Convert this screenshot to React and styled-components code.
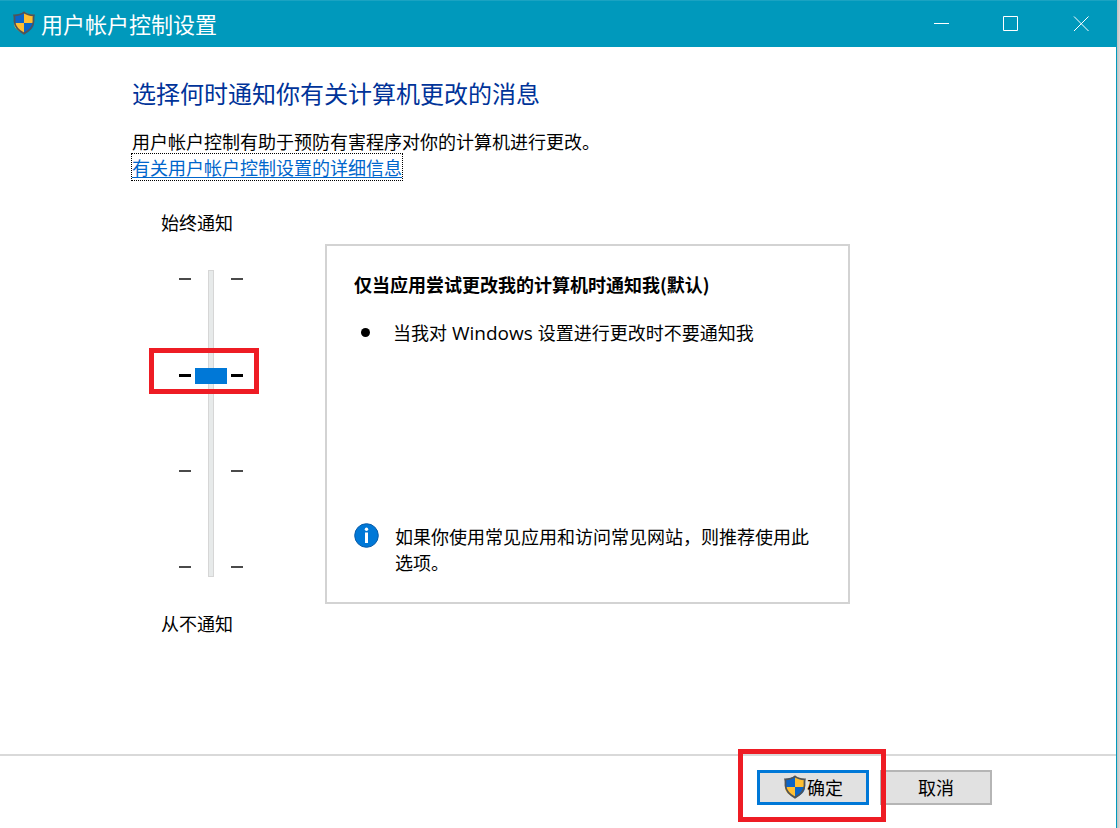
import React, { useState } from 'react'
import styled, { createGlobalStyle } from 'styled-components'

const colors = {
  accent: '#0099bc',
  blue: '#0078d7',
  heading: '#003399',
  link: '#0066cc',
  mark: '#ee1c24',
  line: '#d3d3d3'
}

const GlobalStyle = createGlobalStyle`
  * {
    box-sizing: border-box;
  }

  body {
    margin: 0;
    color: #000;
    font-family: "Noto Sans CJK SC", sans-serif;
    font-size: 18px;
    line-height: 26px;
  }

  h1, h2, p, ul {
    margin: 0;
    padding: 0;
    font-weight: 400;
  }
`

const Desktop = styled.div`
  min-height: 100vh;
  display: flex;
  padding-right: 3px;
  background: linear-gradient(to left, #d8d8d8, #c0c0c0 3px);
`

const Window = styled.div`
  flex: 1;
  display: flex;
  flex-direction: column;
  background: #fff;
  border-right: 1px solid ${colors.accent};
`

const TitleBar = styled.header`
  display: flex;
  align-items: center;
  height: 47px;
  padding-left: 12px;
  color: #fff;
  background: ${colors.accent};
  border-top: 1px solid #1aa3c2;

  > svg {
    margin-bottom: 2px;
  }
`

const WindowTitle = styled.h1`
  flex: 1;
  margin-left: 5px;
  padding-bottom: 3px;
  font-size: 22px;
  line-height: 32px;
`

const CaptionButton = styled.button`
  display: grid;
  place-items: center;
  width: 70px;
  height: 46px;
  padding: 0;
  color: inherit;
  background: none;
  border: 0;
`

const Content = styled.main`
  flex: 1;
  width: 100%;
  max-width: 850px;
  padding: 30px 0 40px 132px;
`

const Heading = styled.h2`
  margin-bottom: 19px;
  color: ${colors.heading};
  font-size: 24px;
  line-height: 32px;
`

const DetailLink = styled.a`
  display: inline-block;
  color: ${colors.link};
  outline: 1px dotted #000;
  text-underline-offset: 2px;
`

const Settings = styled.div`
  display: flex;
  align-items: flex-start;
  margin-top: 29px;
`

const Levels = styled.div`
  display: flex;
  flex-direction: column;
  width: 193px;
  padding-left: 29px;
`

const SliderBox = styled.div`
  position: relative;
  display: grid;
  grid-template-columns: 12px 32px 12px;
  column-gap: 4px;
  align-items: center;
  width: 64px;
  height: 307px;
  margin: 35px 0 33px 18px;
`

const Ticks = styled.div`
  display: flex;
  flex-direction: column;
  justify-content: space-between;
  height: 292px;
`

const Tick = styled.span`
  height: 4px;
  border: solid ${props => (props.$active ? '#000' : '#4a4a4a')};
  border-width: ${props => (props.$active ? '3px 0 0' : '2px 0 0')};
`

const Rail = styled.div`
  grid-area: 1 / 2;
  justify-self: center;
  width: 6px;
  height: 307px;
  background: #e7eaea;
  border: 1px solid #d6d6d6;
`

const Range = styled.input`
  grid-area: 1 / 2;
  appearance: none;
  writing-mode: vertical-lr;
  direction: rtl;
  width: 32px;
  height: 304px;
  margin: 0;
  background: none;

  &::-webkit-slider-thumb {
    appearance: none;
    width: 32px;
    height: 16px;
    background: ${colors.blue};
    border: 0;
    border-radius: 0;
  }
`

const SliderMark = styled.div`
  position: absolute;
  top: 78px;
  left: -30px;
  width: 110px;
  height: 46px;
  border: 5px solid ${colors.mark};
  pointer-events: none;
`

const Panel = styled.section`
  flex: 1;
  display: flex;
  flex-direction: column;
  justify-content: space-between;
  min-height: 360px;
  margin-top: 35px;
  padding: 25px 27px 27px;
  border: 2px solid ${colors.line};
`

const PanelTitle = styled.p`
  margin-bottom: 22px;
  font-weight: 700;
`

const BulletList = styled.ul`
  list-style: none;
`

const BulletItem = styled.li`
  display: flex;
  align-items: center;
  gap: 23px;
  padding-left: 7px;

  &::before {
    content: "";
    width: 9px;
    height: 9px;
    background: #000;
    border-radius: 50%;
  }
`

const Latin = styled.span`
  font-family: "Open Sans", sans-serif;
  font-size: 19px;
`

const Advice = styled.div`
  display: flex;
  align-items: flex-start;
  gap: 16px;

  svg {
    flex: none;
  }
`

const Footer = styled.footer`
  display: flex;
  align-items: flex-start;
  justify-content: flex-end;
  gap: 11px;
  height: 74px;
  padding: 14px 124px 0 0;
  border-top: 2px solid #d9d9d9;
`

const ButtonSlot = styled.div`
  position: relative;
`

const ButtonMark = styled.div`
  position: absolute;
  inset: -21px -17px -17px -19px;
  border: 5px solid ${colors.mark};
  pointer-events: none;
  z-index: 1;
`

const Button = styled.button`
  display: flex;
  align-items: center;
  justify-content: center;
  width: 112px;
  height: 35px;
  padding: 0 0 2px;
  color: #000;
  font: inherit;
  background: #e1e1e1;
  border: ${props => (props.$primary ? `3px solid ${colors.blue}` : '2px solid #b5b5b5')};
`

const Shield = () => (
  <svg width="24" height="24" viewBox="0 0 24 24" aria-hidden="true">
    <path d="M12 1C9 3 5 4 2 4v7h10z" fill="#0a64c8" />
    <path d="M12 1c3 2 7 3 10 3v8H12z" fill="#ffbe32" />
    <path d="M2 12h10v11C6 20 2 17 2 12z" fill="#ffbe32" />
    <path d="M12 12h10c0 5-4 8-10 11z" fill="#0a64c8" />
    <path d="M2 10h10v2H2z" fill="#0a64c8" />
    <path
      d="M12 1.400C9.500 3.400 6 4.300 2.200 4.400c.6 2 .2 4 .3 6.400C2.900 16 6.500 19.600 12 22.600c5.500-3 9.100-6.600 9.500-11.800.1-2.400-.3-4.400.3-6.400C18 4.300 14.500 3.400 12 1.400z"
      fill="none"
      stroke="#505458"
      strokeWidth="1.800"
    />
  </svg>
)

const InfoIcon = () => (
  <svg width="25" height="25" viewBox="0 0 25 25" aria-hidden="true">
    <circle cx="12.500" cy="12.500" r="11.800" fill="#0078d7" stroke="#0a5ca8" />
    <circle cx="12.500" cy="6.300" r="1.700" fill="#fff" />
    <path d="M12.500 9.500V20" stroke="#fff" strokeWidth="3" />
  </svg>
)

const CaptionIcon = ({ d }) => (
  <svg width="16" height="16" viewBox="0 0 16 16" fill="none" stroke="#fff" aria-hidden="true">
    <path d={d} />
  </svg>
)

const levels = [3, 2, 1, 0]

const TickColumn = ({ value }) => (
  <Ticks aria-hidden="true">
    {levels.map(level => (
      <Tick key={level} $active={level === value} />
    ))}
  </Ticks>
)

const App = () => {
  const [level, setLevel] = useState(2)

  return (
    <Desktop>
      <GlobalStyle />
      <Window>
        <TitleBar>
          <Shield />
          <WindowTitle>用户帐户控制设置</WindowTitle>
          <CaptionButton aria-label="最小化">
            <CaptionIcon d="M1 7.500h15" />
          </CaptionButton>
          <CaptionButton aria-label="最大化">
            <CaptionIcon d="M.5.5h14v14H.5z" />
          </CaptionButton>
          <CaptionButton aria-label="关闭">
            <CaptionIcon d="M1 .5l14.500 14.500M15.500 .5L1 15" />
          </CaptionButton>
        </TitleBar>

        <Content>
          <Heading>选择何时通知你有关计算机更改的消息</Heading>
          <p>用户帐户控制有助于预防有害程序对你的计算机进行更改。</p>
          <DetailLink href="#details">有关用户帐户控制设置的详细信息</DetailLink>

          <Settings>
            <Levels>
              <label htmlFor="level">始终通知</label>
              <SliderBox>
                <TickColumn value={level} />
                <Rail />
                <Range
                  id="level"
                  type="range"
                  min="0"
                  max="3"
                  value={level}
                  onChange={({ target: { value } }) => setLevel(Number(value))}
                />
                <TickColumn value={level} />
                <SliderMark />
              </SliderBox>
              <label htmlFor="level">从不通知</label>
            </Levels>

            <Panel>
              <div>
                <PanelTitle>仅当应用尝试更改我的计算机时通知我(默认)</PanelTitle>
                <BulletList>
                  <BulletItem>
                    <span>
                      当我对<Latin> Windows </Latin>设置进行更改时不要通知我
                    </span>
                  </BulletItem>
                </BulletList>
              </div>
              <Advice>
                <InfoIcon />
                <p>如果你使用常见应用和访问常见网站，则推荐使用此选项。</p>
              </Advice>
            </Panel>
          </Settings>
        </Content>

        <Footer>
          <ButtonSlot>
            <Button type="button" $primary>
              <Shield />
              确定
            </Button>
            <ButtonMark />
          </ButtonSlot>
          <Button type="button">取消</Button>
        </Footer>
      </Window>
    </Desktop>
  )
}

export default App
